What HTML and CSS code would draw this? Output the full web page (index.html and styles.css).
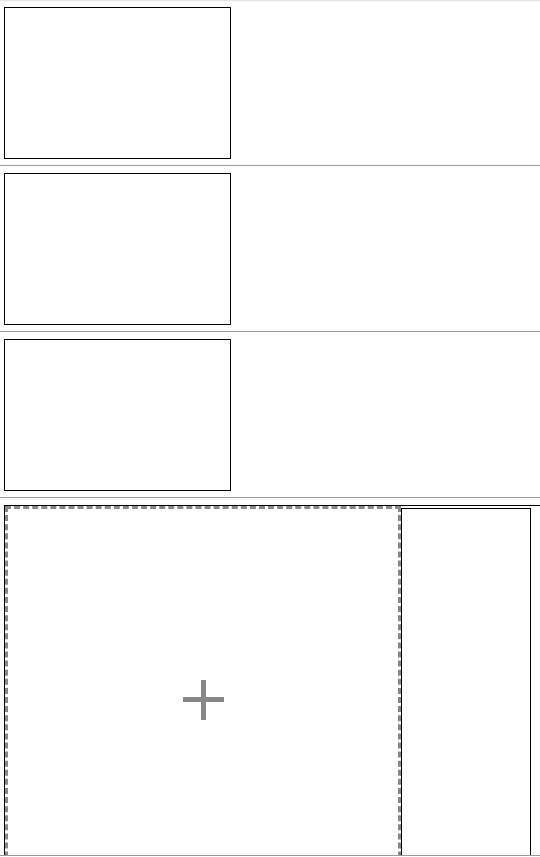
FILE: index.html
```html
<!DOCTYPE html>
<html>
<head>
<meta charset="utf-8">
<link rel="stylesheet" href="styles.css">
</head>
<body>
<div class="list">
  <div class="row"><div class="card"></div></div>
  <div class="row"><div class="card"></div></div>
  <div class="row"><div class="card"></div></div>
</div>
<div class="editor">
  <div class="stage">
    <div class="dropzone">
      <svg class="plus" width="41" height="40" viewBox="0 0 41 40">
        <rect x="18" y="0" width="5" height="40" fill="#888"/>
        <rect x="0" y="17" width="41" height="5" fill="#888"/>
      </svg>
    </div>
    <div class="side"></div>
  </div>
</div>
</body>
</html>
```
FILE: styles.css
```css
html, body {
  margin: 0;
  padding: 0;
  background: #fff;
}
body {
  width: 540px;
  height: 857px;
  overflow: hidden;
  font-family: "Liberation Sans", Arial, sans-serif;
}
.list {
  border-top: 1px solid #e4e4e4;
}
.row {
  padding: 7px 4px 6px;
  border-bottom: 1px solid #9e9e9e;
}
.row:first-child {
  padding-top: 6px;
}
.card {
  width: 225px;
  height: 150px;
  border: 1px solid #000;
}
.editor {
  box-sizing: border-box;
  height: 358px;
  padding-top: 7px;
  border-bottom: 1px solid #999;
  overflow: hidden;
}
.stage {
  margin-left: 4px;
  border-top: 1px solid #000;
  border-left: 1px solid #000;
  display: flex;
  align-items: flex-start;
  height: 400px;
}
.dropzone {
  box-sizing: border-box;
  width: 396px;
  height: 388px;
  border: 3px dashed #888;
  display: flex;
  align-items: center;
  justify-content: center;
  flex: none;
}
.plus {
  display: block;
}
.side {
  box-sizing: border-box;
  width: 130px;
  height: 400px;
  margin-top: 2px;
  border: 1px solid #000;
  flex: none;
}
```
